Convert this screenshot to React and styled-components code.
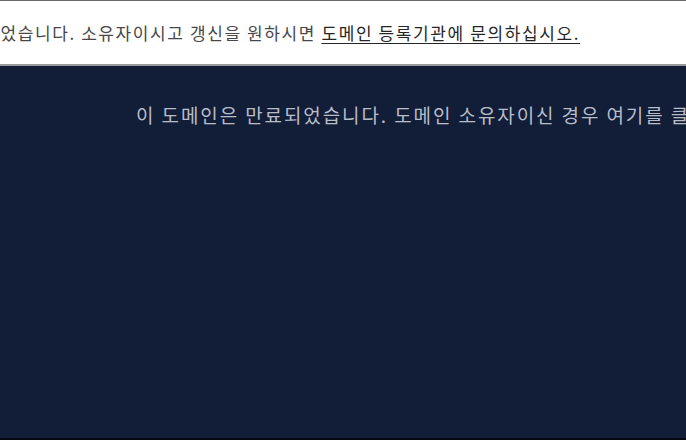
import styled, { createGlobalStyle } from 'styled-components';

const GlobalStyle = createGlobalStyle`
  html, body {
    margin: 0;
    padding: 0;
    height: 100%;
  }
  body {
    font-family: "Noto Sans CJK KR", "Noto Sans", sans-serif;
    overflow: hidden;
  }
  #root {
    height: 100%;
  }
`

const Page = styled.div`
  display: flex;
  flex-direction: column;
  height: 100vh;
  background-color: #121d38;
`

const Notice = styled.header`
  display: flex;
  justify-content: flex-end;
  align-items: center;
  height: 63px;
  padding-right: 106px;
  background-color: #fff;
  border-top: 1px solid #6b6b6b;
  border-bottom: 2px solid #9a9a9a;
  overflow: hidden;
  white-space: nowrap;
  font-size: 17px;
  letter-spacing: 1.6px;
  color: #474747;
`

const NoticeLink = styled.a`
  color: #262626;
  text-decoration: underline;
  text-underline-offset: 3px;
`

const Main = styled.main`
  flex: 1;
  padding: 35px 0 0 136px;
  overflow: hidden;
  white-space: nowrap;
  border-bottom: 2px solid #050810;
`

const Message = styled.p`
  margin: 0;
  font-size: 19px;
  line-height: 28px;
  letter-spacing: 1.9px;
  color: #b8bdc8;
`

const App = () => {
  return (
    <>
      <GlobalStyle />
      <Page>
        <Notice>
          이 도메인은 만료되었습니다. 소유자이시고 갱신을 원하시면&nbsp;
          <NoticeLink href="#">도메인 등록기관에 문의하십시오.</NoticeLink>
        </Notice>
        <Main>
          <Message>이 도메인은 만료되었습니다. 도메인 소유자이신 경우 여기를 클릭하여 갱신하십시오.</Message>
        </Main>
      </Page>
    </>
  )
}

export default App;
